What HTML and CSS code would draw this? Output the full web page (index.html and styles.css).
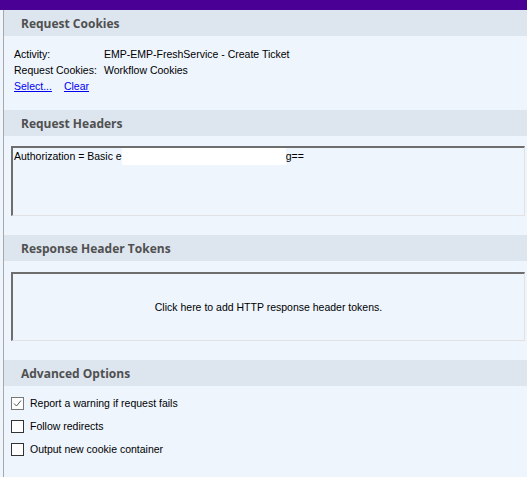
FILE: index.html
```html
<!DOCTYPE html>
<html>
<head>
<meta charset="utf-8">
<link rel="stylesheet" href="styles.css">
</head>
<body>
<div class="topbar"></div>
<div class="panel">
  <div class="section-head">Request Cookies</div>
  <div class="section-body cookies">
    <div class="kv"><span class="k">Activity:</span><span class="v">EMP-EMP-FreshService - Create Ticket</span></div>
    <div class="kv"><span class="k">Request Cookies:</span><span class="v">Workflow Cookies</span></div>
    <div class="links"><a href="#">Select...</a><a href="#">Clear</a></div>
  </div>

  <div class="section-head">Request Headers</div>
  <div class="section-body headers-body">
    <div class="box headers">
      <span>Authorization = Basic e</span><span class="redact"></span><span>g==</span>
    </div>
  </div>

  <div class="section-head">Response Header Tokens</div>
  <div class="section-body tokens-body">
    <div class="box tokens">Click here to add HTTP response header tokens.</div>
  </div>

  <div class="section-head">Advanced Options</div>
  <div class="section-body options">
    <label class="opt"><span class="cb checked"><svg viewBox="0 0 13 13" width="13" height="13"><path d="M3 6.5 L5.5 9 L10 3.5" fill="none" stroke="#555" stroke-width="1"/></svg></span>Report a warning if request fails</label>
    <label class="opt"><span class="cb"></span>Follow redirects</label>
    <label class="opt"><span class="cb"></span>Output new cookie container</label>
  </div>
</div>
</body>
</html>
```

FILE: styles.css
```css
html, body {
  margin: 0;
  padding: 0;
  background: #eef5fd;
  font-family: "Liberation Sans", Arial, sans-serif;
  font-size: 10.5px;
  color: #000;
  width: 527px;
  height: 477px;
  overflow: hidden;
}
.topbar {
  height: 10px;
  background: #4a0094;
}
.panel {
  margin-left: 3px;
  border-left: 1px solid #a8a8a8;
  min-height: 467px;
}
.section-head {
  height: 24px;
  padding-top: 2px;
  line-height: 24px;
  background: #dde5ee;
  color: #505050;
  font-family: "Open Sans", "Noto Sans", sans-serif;
  font-weight: bold;
  font-size: 12px;
  padding-left: 17px;
}
.section-body {
  padding-left: 7px;
}
.cookies {
  padding: 10px 0 16px 10px;
}
.headers-body {
  padding-top: 10px;
  padding-bottom: 19px;
}
.tokens-body {
  padding-top: 11px;
  padding-bottom: 19px;
}
.kv {
  display: flex;
  height: 16px;
  line-height: 16px;
}
.k {
  width: 90px;
}
.links {
  display: flex;
  gap: 12px;
  height: 16px;
  line-height: 16px;
}
.links a {
  color: #0000ee;
  text-decoration: underline;
}
.box {
  margin-right: 2px;
  border-top: 2px solid #6e6e6e;
  border-left: 2px solid #6e6e6e;
  border-right: 1px solid #e2e2e2;
  border-bottom: 1px solid #e2e2e2;
  box-sizing: border-box;
}
.headers {
  display: flex;
  align-items: flex-start;
  line-height: 16px;
  padding-left: 1px;
  height: 70px;
}
.redact {
  display: inline-block;
  width: 164px;
  height: 17px;
  background: #fff;
}
.tokens {
  display: flex;
  align-items: center;
  justify-content: center;
  height: 69px;
}
.options {
  padding-top: 11px;
  padding-left: 7px;
  display: flex;
  flex-direction: column;
  gap: 10px;
}
.opt {
  display: flex;
  align-items: center;
  height: 13px;
  line-height: 13px;
}
.cb {
  width: 13px;
  height: 13px;
  box-sizing: border-box;
  border: 1px solid #333;
  background: #fff;
  margin-right: 6px;
  position: relative;
}
.cb.checked {
  border-color: #777;
}
.cb svg {
  position: absolute;
  left: -1px;
  top: -1px;
}
```
